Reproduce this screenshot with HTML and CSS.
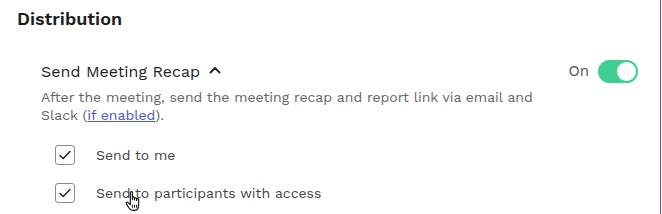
FILE: index.html
```html
<!DOCTYPE html>
<html>
<head>
<meta charset="utf-8">
<link rel="stylesheet" href="styles.css">
</head>
<body>
<div class="panel">
  <h2 class="title">Distribution</h2>
  <section class="recap">
    <div class="recap-head">
      <div class="recap-title">
        <span>Send Meeting Recap</span>
        <svg class="caret" width="12" height="8" viewBox="0 0 12 8"><path d="M1.5 6.5 L6 2 L10.5 6.5" fill="none" stroke="#222" stroke-width="1.8" stroke-linecap="round" stroke-linejoin="round"/></svg>
      </div>
      <div class="switch-wrap">
        <span class="switch-label">On</span>
        <span class="switch"><span class="knob"></span></span>
      </div>
    </div>
    <p class="desc">After the meeting, send the meeting recap and report link via email and Slack (<a href="#">if enabled</a>).</p>
    <ul class="options">
      <li class="option"><span class="box"><svg width="14" height="12" viewBox="0 0 14 12"><path d="M2 6.5 L5.2 9.5 L12 2.5" fill="none" stroke="#222" stroke-width="1.5" stroke-linecap="round" stroke-linejoin="round"/></svg></span><span class="opt-label">Send to me</span></li>
      <li class="option"><span class="box"><svg width="14" height="12" viewBox="0 0 14 12"><path d="M2 6.5 L5.2 9.5 L12 2.5" fill="none" stroke="#222" stroke-width="1.5" stroke-linecap="round" stroke-linejoin="round"/></svg></span><span class="opt-label">Send to participants with access</span>
        <svg class="cursor" width="21" height="23" viewBox="0 0 20 22"><path d="M6 2.5 C6 1.3 8 1.3 8 2.5 L8 9 L8 7.5 C8 6.3 10 6.3 10 7.5 L10 9.5 L10 8.3 C10 7.1 12 7.1 12 8.3 L12 10 L12 9.2 C12 8 14 8 14 9.2 L14 14 C14 17 12.5 19.5 9.5 19.5 L8.5 19.5 C6.5 19.5 5.5 18.5 4.5 17 L2.2 13 C1.6 12 2.8 11 3.7 11.8 L6 14 Z" fill="#fff" stroke="#111" stroke-width="1.1" stroke-linejoin="round"/><path d="M8 14 L8 17 M10 14 L10 17 M12 14 L12 17" stroke="#111" stroke-width="0.9"/></svg>
      </li>
    </ul>
  </section>
</div>
</body>
</html>
```
FILE: styles.css
```css
html, body {
  margin: 0;
  padding: 0;
  background: #fff;
}
body {
  font-family: "Work Sans", "Inter", "Open Sans", sans-serif;
  color: #222;
  width: 662px;
  height: 214px;
  overflow: hidden;
}
.panel {
  box-sizing: border-box;
  width: 661px;
  height: 214px;
  border-right: 1.5px solid #5a4db3;
  padding: 8px 0 0 17px;
}
.title {
  margin: 0;
  font-size: 18px;
  font-weight: 600;
  line-height: 22px;
  color: #1c1c1c;
}
.recap {
  padding: 29px 22px 0 24px;
}
.recap-head {
  display: flex;
  justify-content: space-between;
  align-items: center;
  height: 24px;
}
.recap-title {
  display: flex;
  align-items: center;
  gap: 9px;
  font-size: 16px;
  font-weight: 400;
  color: #1f1f1f;
}
.caret {
  margin-top: -2px;
}
.switch-wrap {
  display: flex;
  align-items: center;
  gap: 9px;
}
.switch-label {
  font-size: 15px;
  color: #555;
}
.switch {
  width: 40px;
  height: 23px;
  border-radius: 12px;
  background: #3fcf95;
  display: flex;
  align-items: center;
  justify-content: flex-end;
  padding: 0 2px;
  box-sizing: border-box;
}
.knob {
  width: 19px;
  height: 19px;
  border-radius: 50%;
  background: #fff;
}
.desc {
  margin: 5px 0 0;
  font-size: 14px;
  line-height: 18px;
  color: #666;
  width: 500px;
}
.desc a {
  color: #4a57c9;
}
.options {
  list-style: none;
  margin: 21px 0 0;
  padding: 0 0 0 14px;
  display: flex;
  flex-direction: column;
  gap: 18px;
}
.option {
  display: flex;
  align-items: center;
  gap: 21px;
  height: 20px;
  position: relative;
}
.box {
  width: 20px;
  height: 20px;
  box-sizing: border-box;
  border: 1px solid #8a8a8a;
  border-radius: 3px;
  display: flex;
  align-items: center;
  justify-content: center;
}
.opt-label {
  font-size: 14px;
  color: #444;
}
.cursor {
  position: absolute;
  left: 69px;
  top: 7px;
}
```
